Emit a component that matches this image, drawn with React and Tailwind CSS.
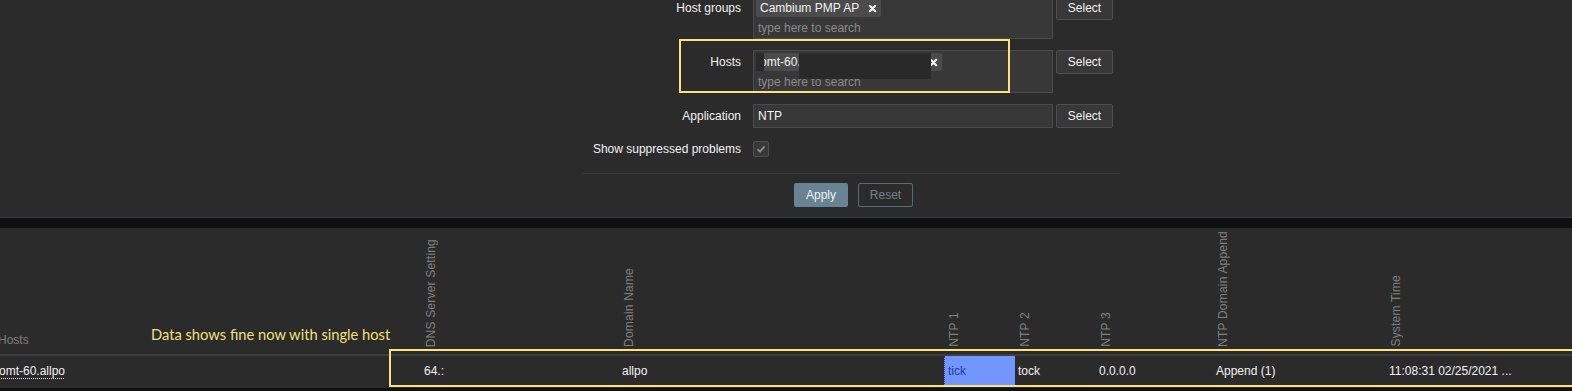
import React from "react";

const font = { fontFamily: '"Liberation Sans", Arial, sans-serif' };

const CloseX = () => (
  <svg width="9" height="9" viewBox="0 0 10 10" className="shrink-0">
    <path d="M2 2 L8 8 M8 2 L2 8" stroke="#f2f2f2" strokeWidth="2.4" strokeLinecap="round" />
  </svg>
);

const SelectButton = () => (
  <button className="w-[57px] h-[24px] bg-[#383838] border border-[#4f4f4f] rounded-[2px] text-[12px] text-[#f2f2f2] leading-none">
    Select
  </button>
);

const columns = [
  { w: "w-[421px]", head: "Hosts", value: "omt-60.allpo", link: true },
  { w: "w-[198px]", head: "DNS Server Setting", value: "64.:" },
  { w: "w-[325px]", head: "Domain Name", value: "allpo" },
  { w: "w-[71px]", head: "NTP 1", value: "tick", hl: true },
  { w: "w-[81px]", head: "NTP 2", value: "tock" },
  { w: "w-[117px]", head: "NTP 3", value: "0.0.0.0" },
  { w: "w-[173px]", head: "NTP Domain Append", value: "Append (1)" },
  { w: "flex-1", head: "System Time", value: "11:08:31 02/25/2021 ..." },
];

const App = () => {
  return (
    <div className="w-[1572px] h-[391px] bg-[#2b2b2b] overflow-hidden text-[12px] text-[#f2f2f2]" style={font}>
      {/* filter panel */}
      <div className="relative h-[217px] overflow-hidden">
        <div className="ml-[583px] w-[537px] -mt-[4px]">
          <div className="flex items-start">
            <div className="w-[160px] pr-[2px] h-[24px] leading-[24px] text-right">Host groups</div>
            <div className="ml-[10px] w-[300px] h-[43px] bg-[#383838] border border-[#4b4b4b] px-[2px] pt-[2px]">
              <div className="inline-flex items-center gap-[9px] h-[18px] px-[4px] bg-[#4b4b4b] rounded-[2px]">
                <span>Cambium PMP AP</span>
                <CloseX />
              </div>
              <div className="pl-[2px] leading-[22px] text-[#8a8a8a]">type here to search</div>
            </div>
            <div className="ml-[3px]">
              <SelectButton />
            </div>
          </div>

          <div className="flex items-start mt-[11px]">
            <div className="w-[160px] pr-[2px] h-[24px] leading-[24px] text-right">Hosts</div>
            <div className="relative ml-[10px] w-[300px] h-[43px] bg-[#383838] border border-[#4b4b4b] px-[2px] pt-[2px]">
              <div className="flex items-center justify-between w-[186px] h-[18px] px-[4px] bg-[#4b4b4b] rounded-[2px]">
                <span>omt-60.</span>
                <CloseX />
              </div>
              <div className="pl-[2px] leading-[22px] text-[#8a8a8a]">type here to search</div>
              <div className="absolute left-[2px] top-[2px] w-[8px] h-[18px] bg-[#2a2a2a]" />
              <div className="absolute left-[45px] top-[2px] w-[132px] h-[26px] bg-[#292929]" />
            </div>
            <div className="ml-[3px]">
              <SelectButton />
            </div>
          </div>

          <div className="flex items-center mt-[11px]">
            <div className="w-[160px] pr-[2px] text-right">Application</div>
            <div className="ml-[10px] w-[300px] h-[24px] bg-[#383838] border border-[#4b4b4b] px-[4px] leading-[22px]">
              NTP
            </div>
            <div className="ml-[3px]">
              <SelectButton />
            </div>
          </div>

          <div className="flex items-center mt-[12px]">
            <div className="w-[160px] pr-[2px] text-right">Show suppressed problems</div>
            <div className="ml-[10px] w-[16px] h-[16px] bg-[#383838] border border-[#4f4f4f] rounded-[2px] flex items-center justify-center">
              <svg width="10" height="10" viewBox="0 0 10 10">
                <path d="M1.5 5.2 L4 7.6 L8.6 2.4" fill="none" stroke="#8c8c8c" strokeWidth="1.8" />
              </svg>
            </div>
          </div>

          <div className="mt-[15px] h-px bg-[#3a3a3a]" />

          <div className="flex justify-center gap-[10px] mt-[9px] pl-[4px]">
            <button className="w-[54px] h-[24px] bg-[#688391] rounded-[2px] text-[12px] text-[#f2f2f2]">Apply</button>
            <button className="w-[55px] h-[24px] border border-[#566b76] rounded-[2px] text-[12px] text-[#71828b]">Reset</button>
          </div>
        </div>

        <div className="absolute left-[679px] top-[39px] w-[331px] h-[54px] border-2 border-[#fde37e]" />
      </div>

      <div className="h-[11px] bg-[#0f1012] border-t border-[#3a3e44]" />

      {/* results table */}
      <div className="relative h-[160px]">
        <div className="flex h-[126px] items-end pb-[7px]">
          {columns.map((c, i) => (
            <div key={c.head} className={`${c.w} shrink-0 pl-[3px] text-[#808080]`}>
              {i === 0 ? (
                <span className="block -ml-[5px] leading-[14px]">{c.head}</span>
              ) : (
                <span className="block w-fit [writing-mode:vertical-rl] rotate-180 leading-[14px] tracking-[0.2px]">
                  {c.head}
                </span>
              )}
            </div>
          ))}
        </div>
        <div className="h-[2px] bg-[#3d3d3d]" />
        <div className="flex h-[30px]">
          {columns.map((c) =>
            c.hl ? (
              <div key={c.head} className={`${c.w} shrink-0 flex items-center pl-[3px] bg-[#7396fe] text-[#1e3d99] border-l border-dotted border-[#2c3f7a]`}>
                {c.value}
              </div>
            ) : (
              <div key={c.head} className={`${c.w} shrink-0 flex items-center pl-[3px]`}>
                {c.link ? (
                  <span className="-ml-[4px] underline decoration-dotted underline-offset-[3px]">{c.value}</span>
                ) : (
                  c.value
                )}
              </div>
            )
          )}
        </div>

        <div className="absolute left-[151px] top-[97px] text-[14.7px] leading-[18px] text-[#f3e07a]" style={{ fontFamily: "Lato, 'Open Sans', sans-serif" }}>
          Data shows fine now with single host
        </div>
        <div className="absolute left-[389px] top-[121px] -right-[6px] h-[38px] border-2 border-[#fde37e]" />
      </div>

      <div className="h-[3px] bg-[#101113]" />
    </div>
  );
};

export default App;
